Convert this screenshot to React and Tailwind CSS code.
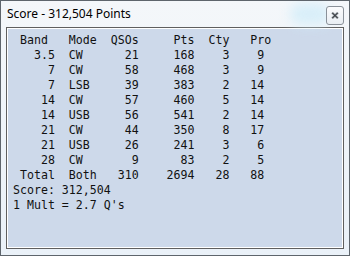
import React from "react";

const rows = [
  ["3.5", "CW", "21", "168", "3", "9"],
  ["7", "CW", "58", "468", "3", "9"],
  ["7", "LSB", "39", "383", "2", "14"],
  ["14", "CW", "57", "460", "5", "14"],
  ["14", "USB", "56", "541", "2", "14"],
  ["21", "CW", "44", "350", "8", "17"],
  ["21", "USB", "26", "241", "3", "6"],
  ["28", "CW", "9", "83", "2", "5"],
  ["Total", "Both", "310", "2694", "28", "88"],
];

function line(r) {
  return (
    r[0].padStart(6) +
    "  " +
    r[1].padEnd(4) +
    r[2].padStart(6) +
    r[3].padStart(8) +
    r[4].padStart(5) +
    r[5].padStart(5)
  );
}

export default function App() {
  const header = " Band   Mode  QSOs     Pts  Cty   Pro";
  const lines = [header, ...rows.map(line), "Score: 312,504", "1 Mult = 2.7 Q's"];
  return (
    <div className="w-[350px] h-[256px] border border-[#5e656c] bg-gradient-to-b from-[#f4f7fa] to-[#eaf1f8] flex flex-col px-[5px] pb-[6px] overflow-hidden">
      <div className="h-[26px] flex items-center justify-between relative">
        <div className="absolute right-[14px] top-[2px] w-[40px] h-[22px] rounded-full bg-[#d2edf9] blur-[6px] opacity-80" />
        <span
          className="relative pl-[1px] text-[12px] text-black leading-none"
          style={{ fontFamily: '"Noto Sans", "Open Sans", sans-serif' }}
        >
          Score - 312,504 Points
        </span>
        <div className="relative w-[18px] h-[19px] mt-[2px] rounded-[3px] border border-[#8a9199] bg-gradient-to-b from-[#fbfcfd] to-[#e9eef3] flex items-center justify-center">
          <svg width="8" height="7" viewBox="0 0 8 7">
            <path d="M1 0.5 L7 6.5 M7 0.5 L1 6.5" stroke="#b4b9be" strokeWidth="2.6" />
            <path d="M1.3 0.8 L6.7 6.2 M6.7 0.8 L1.3 6.2" stroke="#3a3f44" strokeWidth="1.2" />
          </svg>
        </div>
      </div>
      <div className="flex-1 border border-[#5f5f5f] flex">
        <div className="flex-1 border border-white bg-[#cdd9ea]">
          <pre
            className="pt-[4px] pl-[5px] text-[11.6px] leading-[15px] text-[#111]"
            style={{ fontFamily: '"DejaVu Sans Mono", "Liberation Mono", monospace' }}
          >
            {lines.join("\n")}
          </pre>
        </div>
      </div>
    </div>
  );
}
